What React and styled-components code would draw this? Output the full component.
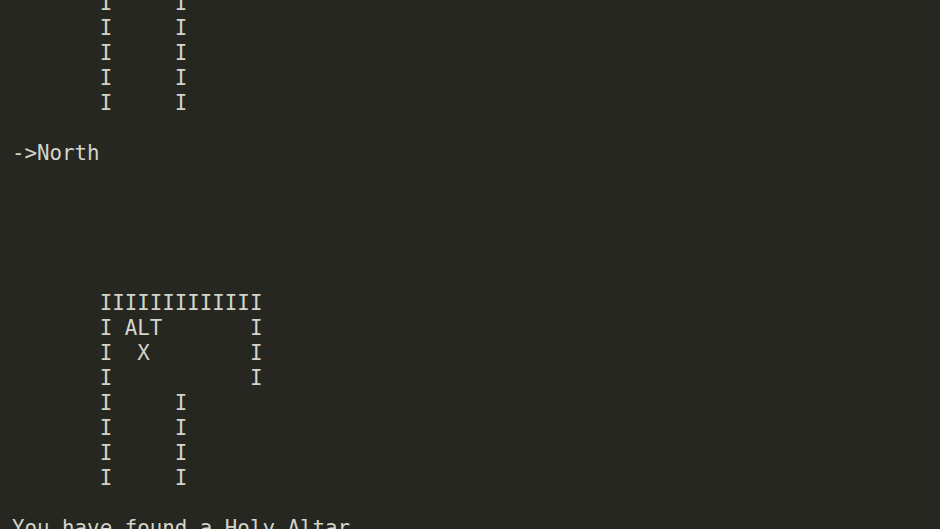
import React from "react";
import styled, { createGlobalStyle } from "styled-components";

const Global = createGlobalStyle`
  html, body { margin: 0; padding: 0; background: #272722; }
  #root { width: 940px; height: 529px; }
`;

const Terminal = styled.div`
  width: 940px;
  height: 529px;
  overflow: hidden;
  background: #272722;
  display: flex;
  flex-direction: column;
  justify-content: flex-end;
  padding: 0 0 0 12px;
  box-sizing: border-box;
`;

const Output = styled.pre`
  margin: 0 0 -12px 0;
  font-family: "DejaVu Sans Mono", "Liberation Mono", monospace;
  font-size: 20.8px;
  line-height: 25px;
  color: #d4d4cb;
  white-space: pre;
`;

const lines = [
  "       IIIIIIIIIIIII",
  "       I           I",
  "       I           I",
  "       I     I",
  "       I     I",
  "       I     I",
  "       I     I",
  "       I     I",
  "",
  "->North",
  "",
  "",
  "",
  "",
  "",
  "       IIIIIIIIIIIII",
  "       I ALT       I",
  "       I  X        I",
  "       I           I",
  "       I     I",
  "       I     I",
  "       I     I",
  "       I     I",
  "",
  "You have found a Holy Altar",
];

export default function App() {
  return (
    <>
      <Global />
      <Terminal>
        <Output>{lines.join("\n")}</Output>
      </Terminal>
    </>
  );
}
